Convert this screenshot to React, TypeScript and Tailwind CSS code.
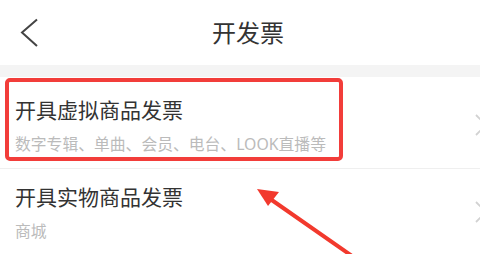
const font = { fontFamily: '"Noto Sans", "Noto Sans CJK SC", sans-serif' };

const RightChevron = () => (
  <svg width="14" height="22" viewBox="0 0 14 22" className="mr-[-8px] shrink-0">
    <path d="M2 1 L12 11 L2 21" fill="none" stroke="#d2d2d2" strokeWidth="1.8" />
  </svg>
);

const InvoiceRow = ({
  title,
  desc,
  className,
  children,
}: {
  title: string;
  desc: string;
  className: string;
  children?: React.ReactNode;
}) => {
  return (
    <div className={`relative flex flex-row items-center justify-between pl-[15px] ${className}`}>
      <div className="flex flex-col">
        <div className="text-[21px] leading-[28px] text-[#333333]">{title}</div>
        <div className="mt-[10px] text-[15.8px] leading-[20px] text-[#bbbbbb]">{desc}</div>
      </div>
      <RightChevron />
      {children}
    </div>
  );
};

export default function App() {
  return (
    <div className="relative w-[480px] h-[254px] overflow-hidden bg-white" style={font}>
      {/* 顶部导航 */}
      <div className="grid h-[65px] grid-cols-[1fr_auto_1fr] items-center">
        <div className="pl-[20px]">
          <svg width="20" height="30" viewBox="0 0 20 30">
            <path d="M17 1.5 L2 14.5 L17 28" fill="none" stroke="#444444" strokeWidth="2" />
          </svg>
        </div>
        <div className="pl-[16px] text-[24px] text-[#333333]">开发票</div>
        <div />
      </div>
      <div className="h-[12px] bg-[#f4f4f4]" />

      <InvoiceRow
        title="开具虚拟商品发票"
        desc="数字专辑、单曲、会员、电台、LOOK直播等"
        className="h-[92px] border-b border-[#efefef] pt-[4px]"
      >
        <div className="absolute left-[5px] top-[1px] h-[83px] w-[338px] rounded-[5px] border-[4px] border-[#f23d3a]" />
      </InvoiceRow>
      <InvoiceRow title="开具实物商品发票" desc="商城" className="h-[90px] pb-[4px]" />

      {/* 标注箭头 */}
      <svg className="absolute left-0 top-0" width="480" height="254" viewBox="0 0 480 254">
        <path d="M352 256 L266 196" stroke="#f2392d" strokeWidth="4" strokeLinecap="round" />
        <path d="M257 189 L279 192 L268 206 Z" fill="#f2392d" />
      </svg>
    </div>
  );
}
